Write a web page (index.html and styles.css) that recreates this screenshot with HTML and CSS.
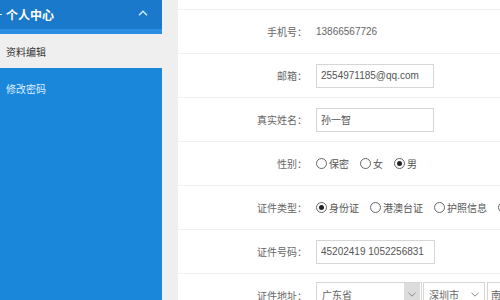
FILE: index.html
```html
<!DOCTYPE html>
<html lang="zh-CN">
<head>
<meta charset="utf-8">
<title>资料编辑</title>
<link rel="stylesheet" href="styles.css">
</head>
<body>
<div class="page">
  <aside class="sidebar">
    <div class="side-head">
      <span class="dash"></span>
      <span class="side-title">个人中心</span>
      <svg class="chev-up" width="10" height="6" viewBox="0 0 10 6"><path d="M1 5.2 L5 1.2 L9 5.2" fill="none" stroke="#d6ebff" stroke-width="1.4"/></svg>
    </div>
    <div class="side-strip"></div>
    <a class="side-item active">资料编辑</a>
    <a class="side-item">修改密码</a>
  </aside>
  <main class="content">
    <div class="spacer"></div>
    <div class="row">
      <span class="label">手机号：</span>
      <span class="value">13866567726</span>
    </div>
    <div class="row">
      <span class="label">邮箱：</span>
      <span class="input">2554971185@qq.com</span>
    </div>
    <div class="row">
      <span class="label">真实姓名：</span>
      <span class="input">孙一智</span>
    </div>
    <div class="row">
      <span class="label">性别：</span>
      <span class="radios">
        <span class="opt"><span class="radio"></span>保密</span>
        <span class="opt"><span class="radio"></span>女</span>
        <span class="opt"><span class="radio checked"></span>男</span>
      </span>
    </div>
    <div class="row">
      <span class="label">证件类型：</span>
      <span class="radios">
        <span class="opt"><span class="radio checked"></span>身份证</span>
        <span class="opt"><span class="radio"></span>港澳台证</span>
        <span class="opt"><span class="radio"></span>护照信息</span>
        <span class="opt"><span class="radio"></span>其他</span>
      </span>
    </div>
    <div class="row">
      <span class="label">证件号码：</span>
      <span class="input wide">45202419 1052256831</span>
    </div>
    <div class="row">
      <span class="label">证件地址：</span>
      <span class="selects">
        <span class="select province">广东省<span class="arrow hover"><svg width="8" height="5" viewBox="0 0 8 5"><path d="M0.5 0.8 L4 4.2 L7.5 0.8" fill="none" stroke="#888" stroke-width="1"/></svg></span></span>
        <span class="select city">深圳市<span class="arrow"><svg width="8" height="5" viewBox="0 0 8 5"><path d="M0.5 0.8 L4 4.2 L7.5 0.8" fill="none" stroke="#888" stroke-width="1"/></svg></span></span>
        <span class="select district">南山区</span>
      </span>
    </div>
  </main>
</div>
</body>
</html>
```
FILE: styles.css
```css
* { box-sizing: border-box; }
html, body { margin: 0; padding: 0; }
body {
  font-family: "Liberation Sans", "Noto Sans CJK SC", sans-serif;
  background: #efefef;
  width: 500px;
  height: 300px;
  overflow: hidden;
}
.page {
  display: flex;
  height: 300px;
  background: #efefef;
}
.sidebar {
  width: 162px;
  flex: none;
  background: #1b87db;
  display: flex;
  flex-direction: column;
}
.side-head {
  height: 29px;
  background: #1a79cb;
  display: flex;
  align-items: center;
  color: #fff;
}
.dash {
  width: 2px;
  height: 1px;
  background: #fff;
  margin-right: 4px;
}
.side-title {
  font-family: "Noto Sans CJK SC", sans-serif;
  font-size: 12px;
  font-weight: bold;
  flex: 1;
  line-height: 1;
}
.chev-up {
  margin-right: 14px;
  margin-top: -4px;
}
.side-strip {
  height: 5px;
  background: #2a8fe2;
}
.side-item {
  display: flex;
  align-items: center;
  padding-left: 6px;
  font-family: "Noto Sans CJK SC", sans-serif;
  font-size: 10px;
  color: #deefff;
  height: 40px;
  margin-top: 0;
}
.side-item.active {
  height: 34px;
  background: #efefef;
  color: #333;
  margin-right: -16px;
}
.content {
  flex: 1;
  margin-left: 16px;
  background: #fff;
  overflow: hidden;
  font-size: 10px;
}
.spacer { height: 9px; }
.row {
  height: 44px;
  border-top: 1px solid #f1f1f1;
  display: flex;
  align-items: center;
  white-space: nowrap;
}
.label {
  width: 129px;
  flex: none;
  text-align: right;
  font-family: "Noto Sans CJK SC", sans-serif;
  color: #666;
  margin-right: 9px;
}
.value {
  color: #666;
}
.input {
  width: 118px;
  height: 24px;
  border: 1px solid #d6d6d6;
  display: flex;
  align-items: center;
  padding-left: 4px;
  color: #555;
  flex: none;
}
.input.wide { width: 119px; }
.radios {
  display: flex;
  align-items: center;
  font-family: "Noto Sans CJK SC", sans-serif;
  color: #555;
}
.opt {
  display: flex;
  align-items: center;
  margin-right: 11px;
}
.radio {
  width: 11px;
  height: 11px;
  border: 1px solid #666;
  border-radius: 50%;
  margin-right: 2px;
  display: flex;
  align-items: center;
  justify-content: center;
  background: #fff;
}
.radio.checked::after {
  content: "";
  width: 5px;
  height: 5px;
  border-radius: 50%;
  background: #222;
}
.selects {
  display: flex;
  gap: 2px;
  align-self: flex-start;
  margin-top: 8px;
}
.select {
  height: 24px;
  border: 1px solid #d6d6d6;
  display: flex;
  align-items: center;
  justify-content: space-between;
  padding-left: 5px;
  font-family: "Noto Sans CJK SC", sans-serif;
  color: #666;
  flex: none;
}
.select.province { width: 106px; margin-right: -1px; }
.select.city { width: 62px; }
.select.district { width: 60px; padding-left: 3px; }
.arrow {
  width: 16px;
  height: 22px;
  display: flex;
  align-items: center;
  justify-content: center;
  margin-right: 1px;
}
.arrow.hover { background: #dcdcdc; }
```
